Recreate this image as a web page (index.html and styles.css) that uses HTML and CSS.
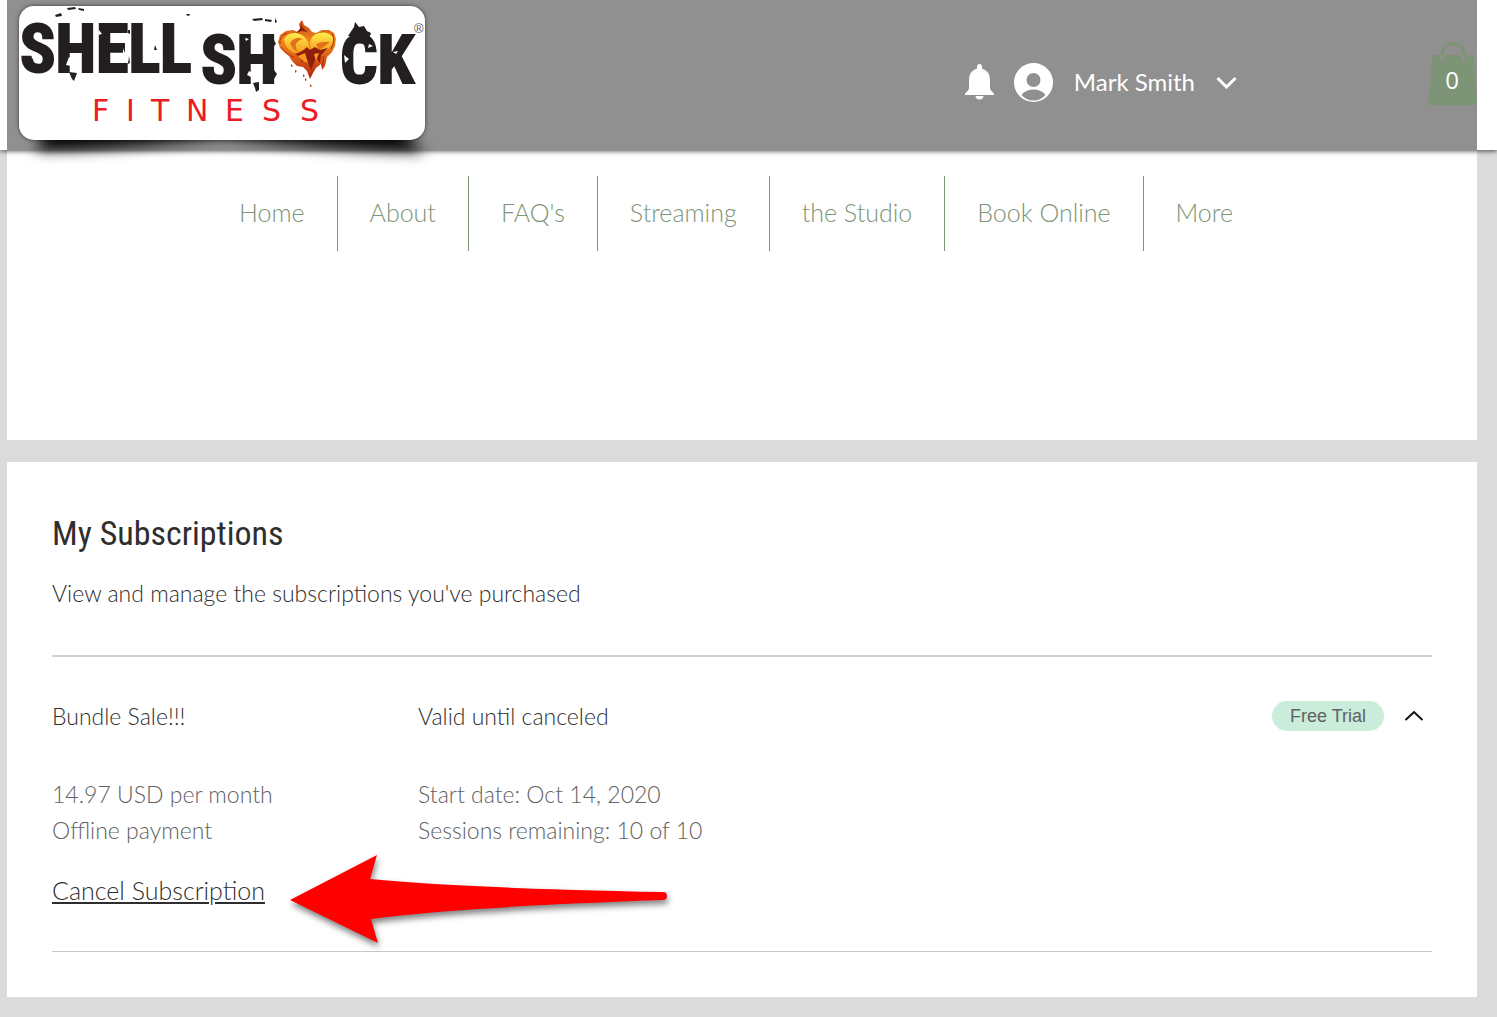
FILE: index.html
```html
<!DOCTYPE html>
<html lang="en">
<head>
    <meta charset="UTF-8">
    <meta name="viewport" content="width=device-width, initial-scale=1">
    <title>My Subscriptions | Shell Shock Fitness</title>
    <link rel="stylesheet" href="styles.css">
</head>
<body>
    <header class="site-header">
        <div class="header-strip">
            <a class="logo" href="#" aria-label="Shell Shock Fitness">
                <svg class="logo-shadow" viewBox="0 0 450 50" aria-hidden="true">
                    <path d="M50 4 L38 24 Q120 24 225 10 Q330 24 428 26 L402 4 Z"/>
                </svg>
                <svg class="logo-art" viewBox="0 0 406 134">
                    <defs>
                        <linearGradient id="fire" x1="0" y1="0" x2="0" y2="1">
                            <stop offset="0" stop-color="#c8401a"/>
                            <stop offset="0.35" stop-color="#ee8a1c"/>
                            <stop offset="0.65" stop-color="#dc5a14"/>
                            <stop offset="1" stop-color="#a82410"/>
                        </linearGradient>
                        <linearGradient id="glow" x1="0" y1="0" x2="0" y2="1">
                            <stop offset="0" stop-color="#fff04a"/>
                            <stop offset="1" stop-color="#f7941d"/>
                        </linearGradient>
                    </defs>
                    <text class="logo-word" x="1" y="66">SHELL</text>
                    <text class="logo-word" x="182" y="77">SH</text>
                    <text class="logo-word" x="321" y="77">CK</text>
                    <!-- ink splatter -->
                    <path fill="#231f20" d="M48 2l8-1 1 2-8 1zM59 2l6 1v2l-5-1zM36 9l6-2 1 3-6 1zM109 24l2 0v4l-2-1zM168 8l3 0-1 2-3-1zM50 66l8 1-3 8-2-2zM110 50l1 7-2 1zM136 39l2 5-3 0zM233 13l10-1 1 2-9 1zM246 13l7 1-1 2-6-1zM256 12l2 4-2 1zM234 77l6-1 0 8-3 2-1-4zM255 34l2 4-2 2zM255 64l3 4-3 5zM329 30l6-9 1-5 4 5 5-1 3 5 4 2-2 6z"/>
                    <path fill="#fff" d="M50 51l4 3 5-4-1 6 4 4-6 1-2 5-2-6-5-1zM12 46l3 5-2 2zM104 42l3 8-3-3zM140 46l4 7-4-2zM230 65l4 2 4-4 0 6 4 3-5 2-4 3-1-6-4-2zM226 32l4 1-3 2zM325 49l5 4-4 4zM350 38l4 2-5 2zM374 46l5-1-2 3zM80 24l3 4-4 1z"/>
                    <!-- burning heart -->
                    <path fill="url(#fire)" d="M291 73L288 65L284 61L278 60L273 55L270 50L265 46L261 42L259 36L261 29L267 25L274 24L279 26L281 22L280 18L283 14L285 19L290 22L293 26L297 27L303 24L310 24L315 27L317 33L316 40L313 46L308 51L306 60L303 64L302 58L297 62L294 67Z"/>
                    <path fill="url(#glow)" d="M265 33Q269 26 277 27Q285 28 289 36L291 43Q285 49 277 48Q266 44 265 33Z"/>
                    <path fill="url(#glow)" d="M291 39Q291 29 300 27Q309 25 314 31Q315 39 307 45Q299 49 293 46Z"/>
                    <path fill="#e2711a" d="M271 37Q276 30 284 33Q279 34 277 38Q276 43 280 46Q273 44 271 37ZM297 38Q303 35 311 36Q305 41 300 44Z"/>
                    <path fill="#8f1f0d" d="M276 48Q283 46 288 41L291 44L296 41L301 44L309 42L302 49L301 57L297 52L292 64L288 54L283 56L281 51ZM282 18L284 22L289 26L283 25L277 27L281 23Z"/>
                    <path fill="#f59a1c" d="M279 50L286 47L289 57L284 55ZM295 48L300 47L297 55Z"/>
                    <path fill="none" stroke="#b92d12" d="M261 38Q260 30 268 27M262 41Q267 49 275 51M313 28Q317 34 312 43M304 50Q306 55 303 60"/>
                    <path fill="#c53212" d="M272 58l2 2-2 1zM276 64l2 1-2 2zM284 68l2 2-2 1zM291 78l2 2-2 1zM286 72l2 2-2 1z"/>
                    <text class="logo-reg" x="395" y="27">®</text>
                    <g class="logo-fitness">
                        <text x="73" y="115">F</text>
                        <text x="107" y="115">I</text>
                        <text x="132" y="115">T</text>
                        <text x="167" y="115">N</text>
                        <text x="206" y="115">E</text>
                        <text x="243" y="115">S</text>
                        <text x="281" y="115">S</text>
                    </g>
                </svg>
            </a>

            <div class="account">
                <button class="icon-btn" type="button" aria-label="Notifications">
                    <svg width="29" height="36" viewBox="0 0 29 36">
                        <path fill="#fff" d="M14.500 0q2.500 0 2.500 3v1.500Q25 7 25 16v8q0 2 4 5.500V31H0v-1.500Q4 26 4 24v-8Q4 7 12 4.500V3q0-3 2.500-3zM10.500 32h8q-.5 3.500-4 3.500t-4-3.500z"/>
                    </svg>
                </button>
                <button class="account-btn" type="button">
                    <svg width="39" height="39" viewBox="0 0 39 39" aria-hidden="true">
                        <circle cx="19.500" cy="19.500" r="19.500" fill="#fff"/>
                        <circle cx="19.500" cy="17" r="7" fill="#909090"/>
                        <path fill="#909090" d="M7.500 32q4-5.500 12-5.500t12 5.500q-5 5.500-12 5.500t-12-5.500z"/>
                    </svg>
                    <span>Mark Smith</span>
                    <svg width="21" height="14" viewBox="0 0 21 14" aria-hidden="true">
                        <path fill="none" stroke="#fff" stroke-width="3" d="M1.500 3l9 9 9-9"/>
                    </svg>
                </button>
            </div>

            <a class="cart" href="#" aria-label="Cart with 0 items">
                <svg width="49" height="63" viewBox="0 0 49 63">
                    <path fill="#7d9477" d="M4.500 13h41L49 63H0z"/>
                    <path fill="none" stroke="#7d9477" stroke-width="3" d="M14 14v-2q1-10.500 11-10.500T36 12v2"/>
                    <path stroke="#909090" stroke-width="3" stroke-linecap="round" d="M14 14.500v3M35.500 14.500v3"/>
                    <text class="cart-count" x="24" y="47">0</text>
                </svg>
            </a>
        </div>
    </header>

    <main class="page">
        <section class="nav-section">
            <nav class="main-nav">
                <a href="#">Home</a>
                <a href="#">About</a>
                <a href="#">FAQ's</a>
                <a href="#">Streaming</a>
                <a href="#">the Studio</a>
                <a href="#">Book Online</a>
                <a href="#">More</a>
            </nav>
        </section>

        <section class="subscriptions">
            <h1>My Subscriptions</h1>
            <p class="intro">View and manage the subscriptions you've purchased</p>

            <article class="subscription">
                <div class="row summary">
                    <span>Bundle Sale!!!</span>
                    <span>Valid until canceled</span>
                    <div class="status">
                        <span class="badge">Free Trial</span>
                        <button class="icon-btn" type="button" aria-label="Collapse details" aria-expanded="true">
                            <svg width="20" height="12" viewBox="0 0 20 12">
                                <path fill="none" stroke="#111" stroke-width="2" d="M1.500 10L10 2l8.500 8"/>
                            </svg>
                        </button>
                    </div>
                </div>
                <div class="row details">
                    <p>14.97 USD per month<br>Offline payment</p>
                    <p>Start date: Oct 14, 2020<br>Sessions remaining: 10 of 10</p>
                </div>
                <div class="cancel">
                    <a href="#">Cancel Subscription</a>
                    <svg class="pointer" width="390" height="100" viewBox="0 0 390 100" aria-hidden="true">
                        <path fill="#f00" d="M4 50L91 5l-7 24q90 9 293 13a4 4 0 0 1 0 8q-203 7-292 19l7 24z"/>
                    </svg>
                </div>
            </article>
        </section>
    </main>
</body>
</html>
```
FILE: styles.css
```css
* {
    box-sizing: border-box;
}

body {
    margin: 0;
    background: #dbdbdb;
    color: #2f2e2e;
    font-family: Lato, "Open Sans", sans-serif;
    font-weight: 300;
    font-size: 23px;
    line-height: 36px;
}

h1, p {
    margin: 0;
}

button {
    background: none;
    border: 0;
    padding: 0;
    font: inherit;
    color: inherit;
    cursor: pointer;
}

svg {
    display: block;
}

/* Header */
.site-header {
    position: relative;
    z-index: 2;
    padding: 0 20px 0 7px;
    background: #fff;
    box-shadow: 0 1px 5px rgba(0, 0, 0, 0.7);
}

.header-strip {
    display: flex;
    align-items: flex-start;
    height: 150px;
    padding: 6px 0 0 12px;
    background: #909090;
}

.logo {
    position: relative;
    width: 406px;
    height: 134px;
    border-radius: 15px;
    box-shadow: 0 0 4px rgba(0, 0, 0, 0.6);
}

.logo-art {
    position: relative;
    background: #fff;
    border-radius: 15px;
}

/* curved shadow that lifts the corners of the logo */
.logo-shadow {
    position: absolute;
    top: 120px;
    left: -22px;
    width: 450px;
    height: 50px;
    overflow: visible;
    filter: blur(7px);
}

.logo-word {
    font-family: "Roboto Condensed", "Open Sans Condensed", Roboto, sans-serif;
    font-weight: 700;
    font-size: 66px;
    fill: #231f20;
    stroke: #231f20;
    stroke-width: 2px;
}

.logo-reg {
    font-family: "Liberation Sans", sans-serif;
    font-size: 13px;
    fill: #555;
}

.logo-fitness {
    font-family: "DejaVu Sans", sans-serif;
    font-weight: 400;
    font-size: 30px;
    fill: #ed1c24;
}

.account {
    display: flex;
    align-items: center;
    gap: 20px;
    height: 152px;
    margin-left: auto;
    margin-right: 191px;
    color: #fff;
    font-size: 24px;
    font-weight: 400;
}

.account-btn {
    display: flex;
    align-items: center;
    gap: 21px;
}

.cart {
    margin-top: 36px;
}

.cart-count {
    font-family: "Open Sans", sans-serif;
    font-size: 24px;
    font-weight: 400;
    fill: #fff;
    text-anchor: middle;
}

/* Page */
.page {
    padding: 0 20px 20px 7px;
}

.nav-section {
    min-height: 290px;
    margin-bottom: 22px;
    padding: 26px 12px 0 0;
    background: #fff;
}

.main-nav {
    display: flex;
    justify-content: center;
}

.main-nav a {
    padding: 0 32px 2px;
    border-left: 1px solid #7d9477;
    color: #7d9477;
    font-size: 25px;
    line-height: 73px;
    text-decoration: none;
}

.main-nav a:first-child {
    border-left: 0;
}

/* Subscriptions */
.subscriptions {
    padding: 47px 45px 45px;
    background: #fff;
}

.subscriptions h1 {
    margin-bottom: 18px;
    font-family: "Roboto Condensed", "Open Sans Condensed", Roboto, sans-serif;
    font-size: 34px;
    font-weight: 400;
    line-height: 48px;
}

.subscription {
    margin-top: 44px;
    padding: 41px 0 42px;
    border-top: 2px solid #d2d2d2;
    border-bottom: 1px solid #c8c8c8;
}

.row {
    display: grid;
    grid-template-columns: 366px 1fr auto;
}

.details {
    margin: 42px 0 24px;
    color: #626161;
}

.status {
    display: flex;
    align-items: center;
    gap: 20px;
    padding-right: 8px;
}

.badge {
    padding: 0 18px;
    border-radius: 15px;
    background: #c9ecdb;
    color: #626161;
    font-family: "Liberation Sans", Arial, sans-serif;
    font-size: 18px;
    font-weight: 400;
    line-height: 30px;
}

.cancel {
    position: relative;
}

.cancel a {
    color: inherit;
    font-size: 25px;
    text-decoration: underline;
}

/* arrow laid over the card, pointing at the cancel link */
.pointer {
    position: absolute;
    top: -22px;
    left: 234px;
    filter: drop-shadow(1px 4px 3px rgba(0, 0, 0, 0.5));
}
```
